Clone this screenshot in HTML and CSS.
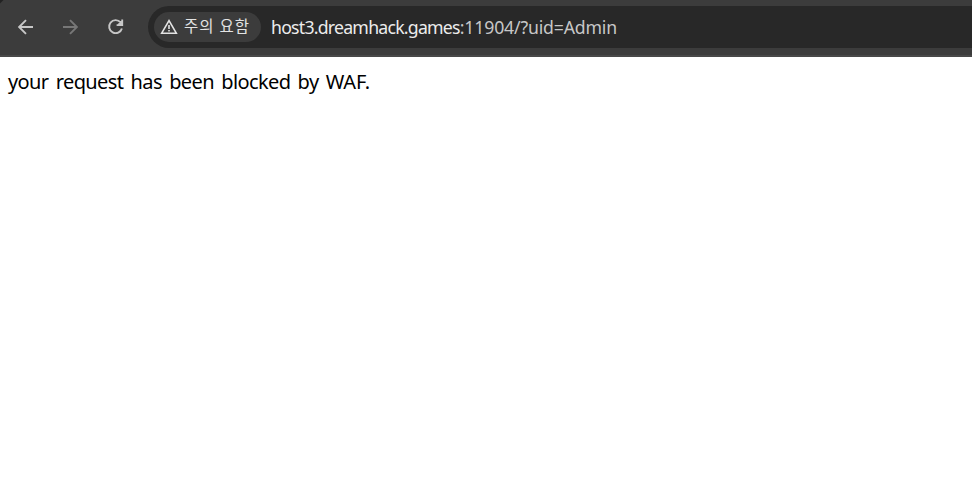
FILE: index.html
```html
<!DOCTYPE html>
<html lang="ko">
<head>
<meta charset="utf-8">
<title>Blocked</title>
<link rel="stylesheet" href="styles.css">
</head>
<body>
<header class="toolbar">
  <nav class="nav">
    <svg class="icon" viewBox="0 0 20 20"><path d="M17 10H3.4M10 3.1 3.1 10l6.9 6.9"/></svg>
    <svg class="icon icon-disabled" viewBox="0 0 20 20"><path d="M2 10h13.6M9 3.1l6.9 6.9L9 16.9"/></svg>
    <svg class="icon" viewBox="0 0 20 20"><path d="M14.6 5.4A6.5 6.5 0 1 0 15.9 11.4M16.2 2.5v5.6h-5.6M15.6 4.6v2.9h-2.9z"/></svg>
  </nav>
  <div class="address">
    <div class="chip">
      <svg class="warn" viewBox="0 0 18 16"><path d="M9 1.7 1.7 14.2h14.6z"/><path d="M9 6v4M9 11v1.6"/></svg>
      <span class="chip-text">주의 요함</span>
    </div>
    <div class="url"><span class="host">host3.dreamhack.games</span><span class="path">:11904/?uid=Admin</span></div>
  </div>
</header>
<main class="page"><span class="message">your request has been blocked by <span class="acronym">WAF.</span></span></main>
</body>
</html>
```
FILE: styles.css
```css
body {
  margin: 0;
  background: #fff;
  font-family: "Noto Sans", "Noto Sans CJK KR", sans-serif;
}
.toolbar {
  display: flex;
  height: 57px;
  box-sizing: border-box;
  padding: 6px 0 7px 16px;
  border-bottom: 2px solid #484848;
  background: linear-gradient(135deg, #222 2px, #3c3c3c 3px);
}
.nav {
  display: flex;
  align-items: center;
  gap: 25px;
  width: 132px;
  padding-bottom: 1px;
}
.icon {
  width: 20px;
  height: 20px;
  fill: none;
  stroke: #c7c7c7;
  stroke-width: 1.9;
}
.icon-disabled { stroke: #777; }
.address {
  display: flex;
  align-items: center;
  flex: 1;
  padding-left: 6px;
  border-radius: 21px 0 0 21px;
  background: #282828;
}
.chip {
  display: flex;
  align-items: center;
  box-sizing: border-box;
  width: 107px;
  height: 30px;
  padding-left: 6px;
  gap: 6px;
  border-radius: 15px;
  background: #3c3c3c;
}
.warn {
  width: 18px;
  height: 16px;
  fill: none;
  stroke: #e3e3e3;
  stroke-width: 1.6;
}
.chip-text {
  padding-bottom: 4px;
  color: #e3e3e3;
  font: 15.5px "Noto Sans CJK KR", sans-serif;
  letter-spacing: 0.9px;
  white-space: nowrap;
}
.url {
  margin-left: 10px;
  font-size: 17.7px;
  white-space: nowrap;
}
.host {
  color: #ececec;
  letter-spacing: -0.77px;
}
.path {
  color: #c7c7c7;
  letter-spacing: -0.18px;
}
.page {
  padding: 11px 8px;
  font-size: 20px;
  line-height: 28px;
  color: #000;
}
.message {
  letter-spacing: -0.6px;
  word-spacing: 2.6px;
}
.acronym { letter-spacing: -0.2px; }
```
